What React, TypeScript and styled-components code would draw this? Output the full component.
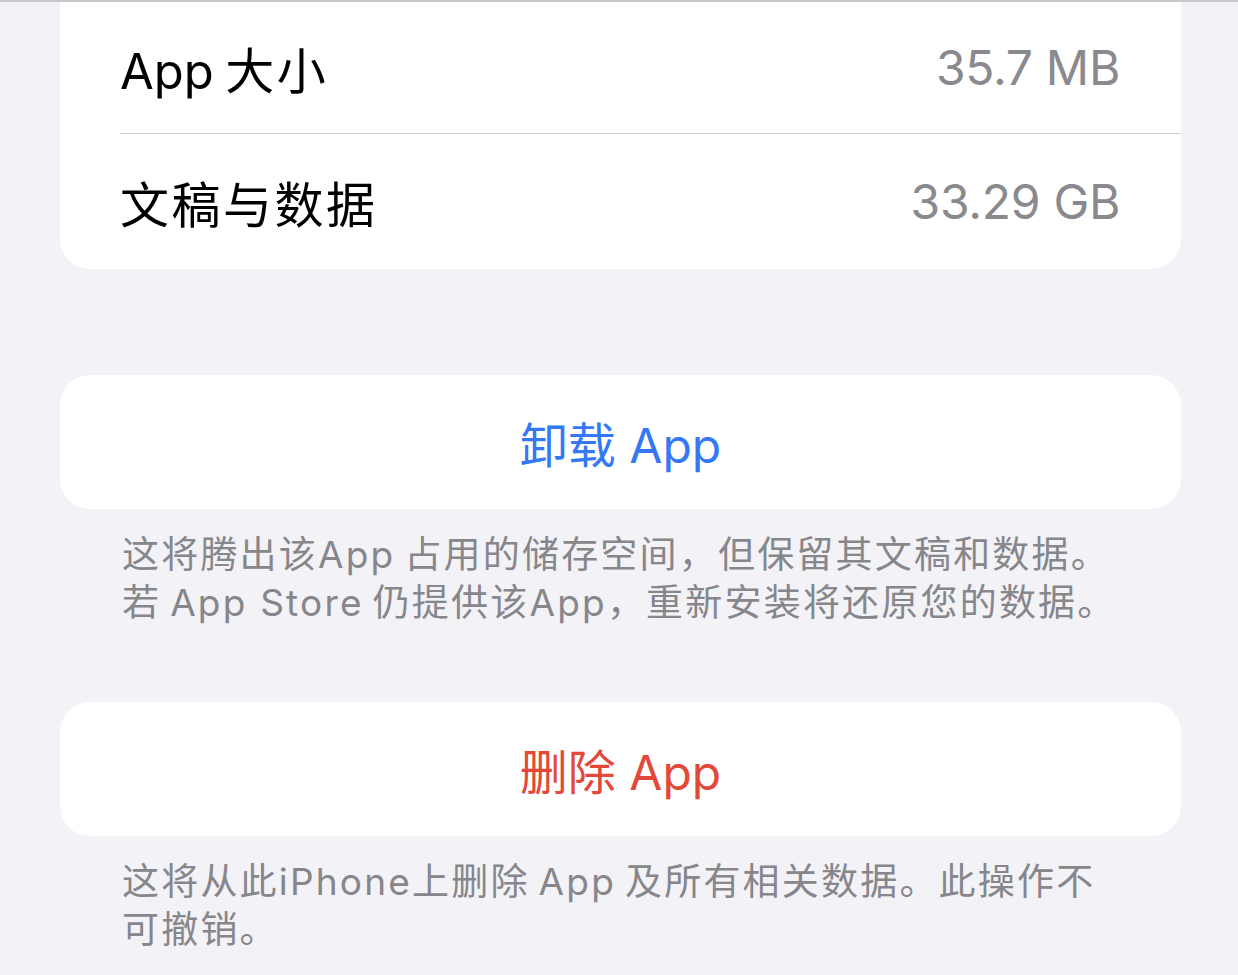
import React from "react";
import styled, { createGlobalStyle } from "styled-components";

const GlobalStyle = createGlobalStyle`
  html, body {
    margin: 0;
    padding: 0;
    background: #f2f2f7;
  }
  body {
    font-family: "Inter", "Noto Sans CJK SC", sans-serif;
    -webkit-font-smoothing: antialiased;
  }
`;

const Page = styled.div`
  width: 1238px;
  height: 975px;
  overflow: hidden;
  box-sizing: border-box;
  border-top: 2px solid #c8c8cc;
  padding: 0 57px 0 60px;
  display: flex;
  flex-direction: column;
`;

const Card = styled.div<{ $top?: boolean }>`
  background: #ffffff;
  border-radius: ${(p) => (p.$top ? "0 0 30px 30px" : "30px")};
  overflow: hidden;
`;

const Row = styled.div<{ $h: number }>`
  height: ${(p) => p.$h}px;
  margin-left: 60px;
  padding-right: 61px;
  display: flex;
  align-items: center;
  justify-content: space-between;
  & + & {
    border-top: 1.5px solid #cfcfd3;
  }
`;

const Label = styled.span`
  font-size: 49px;
  color: #000;
  letter-spacing: 2.5px;
`;

const Latin = styled.span`
  letter-spacing: 0;
`;

const Value = styled.span`
  font-size: 48px;
  color: #8a8a8e;
  letter-spacing: -0.3px;
`;

const Action = styled.button<{ $color: string }>`
  display: block;
  width: 100%;
  height: 134px;
  border: none;
  background: transparent;
  font-family: inherit;
  font-size: 48px;
  color: ${(p) => p.$color};
  padding: 0;
  cursor: pointer;
`;

const Section = styled.div<{ $gap: number }>`
  margin-top: ${(p) => p.$gap}px;
`;

const Footer = styled.p`
  margin: 0;
  padding: 22px 30px 0 62px;
  font-size: 37px;
  line-height: 48px;
  color: #86868b;
  letter-spacing: 2.2px;
  white-space: nowrap;
`;

export default function App() {
  return (
    <>
      <GlobalStyle />
      <Page>
        <Card $top>
          <Row $h={131}>
            <Label>
              <Latin>App</Latin>
              {"\u2009"}大小
            </Label>
            <Value>35.7 MB</Value>
          </Row>
          <Row $h={135}>
            <Label>文稿与数据</Label>
            <Value>33.29 GB</Value>
          </Row>
        </Card>

        <Section $gap={106}>
          <Card>
            <Action $color="#3478f6">卸载 App</Action>
          </Card>
          <Footer>
            这将腾出该App{"\u2009"}占用的储存空间，但保留其文稿和数据。
            <br />
            若{"\u2009"}App Store{"\u2009"}仍提供该App，重新安装将还原您的数据。
          </Footer>
        </Section>

        <Section $gap={75}>
          <Card>
            <Action $color="#e2493a">删除 App</Action>
          </Card>
          <Footer>
            这将从此iPhone上删除{"\u2009"}App{"\u2009"}及所有相关数据。此操作不
            <br />
            可撤销。
          </Footer>
        </Section>
      </Page>
    </>
  );
}
